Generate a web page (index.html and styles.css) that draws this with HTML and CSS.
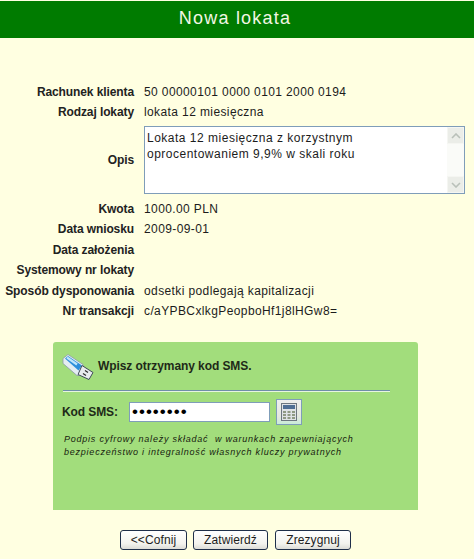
FILE: index.html
```html
<!DOCTYPE html>
<html lang="pl">
<head>
<meta charset="utf-8">
<title>Nowa lokata</title>
<link rel="stylesheet" href="styles.css">
</head>
<body>
<header class="title">Nowa lokata</header>
<main class="details">
  <div class="label">Rachunek klienta</div><div class="value">50 00000101 0000 0101 2000 0194</div>
  <div class="label">Rodzaj lokaty</div><div class="value">lokata 12 miesięczna</div>
  <div class="label">Opis</div>
  <div class="memo">
    <div class="memo-text">Lokata 12 miesięczna z korzystnym oprocentowaniem 9,9% w skali roku</div>
    <div class="scroll">
      <span class="scroll-btn"><svg width="10" height="6" viewBox="0 0 10 6"><path d="M1 5 5 1l4 4" fill="none" stroke="#b9c0b9" stroke-width="1.6"/></svg></span>
      <span class="scroll-btn"><svg width="10" height="6" viewBox="0 0 10 6"><path d="M1 1l4 4 4-4" fill="none" stroke="#b9c0b9" stroke-width="1.6"/></svg></span>
    </div>
  </div>
  <div class="label">Kwota</div><div class="value">1000.00 PLN</div>
  <div class="label">Data wniosku</div><div class="value">2009-09-01</div>
  <div class="label">Data założenia</div><div class="value"></div>
  <div class="label">Systemowy nr lokaty</div><div class="value"></div>
  <div class="label">Sposób dysponowania</div><div class="value">odsetki podlegają kapitalizacji</div>
  <div class="label">Nr transakcji</div><div class="value">c/aYPBCxlkgPeopboHf1j8lHGw8=</div>
</main>
<section class="panel">
  <div class="panel-head">
    <svg class="usb" width="33" height="29" viewBox="0 0 33 28">
      <path d="M1 5 6 1l15 10 1 5-5 6-2 0L1 10z" fill="#e4edf2" stroke="#8b9aa8" stroke-width=".8"/>
      <path d="M3 5 6 2.500l14 9.500-3.500 5z" fill="#2e8fdc"/>
      <path d="M5 4l10 7" stroke="#bfe6fb" stroke-width="2.200"/>
      <path d="M20 12l11 7-4 7-11-5z" fill="#e8ebee" stroke="#3f4c58" stroke-width="1"/>
      <path d="M23 17l3 2M21 20l3 2" stroke="#2d2d2d" stroke-width="1.300"/>
    </svg>
    <h2 class="panel-title">Wpisz otrzymany kod SMS.</h2>
  </div>
  <hr class="rule">
  <div class="code-row">
    <label class="code-label" for="code">Kod SMS:</label>
    <input class="code-input" id="code" type="password" value="12345678">
    <button class="calc" type="button" aria-label="Klawiatura">
      <svg width="16" height="18" viewBox="0 0 16 18">
        <rect x=".5" y=".5" width="15" height="17" fill="#dfe3e6" stroke="#6d7780"/>
        <rect x="2" y="2" width="12" height="4" fill="#4f6f94"/>
        <path d="M2 8h3v2H2zM6.500 8h3v2h-3zM11 8h3v2h-3zM2 11h3v2H2zM6.500 11h3v2h-3zM11 11h3v2h-3zM2 14h3v2H2zM6.500 14h3v2h-3zM11 14h3v2h-3z" fill="#8f9a84"/>
      </svg>
    </button>
  </div>
  <p class="note">Podpis cyfrowy należy składać&nbsp; w warunkach zapewniających bezpieczeństwo i integralność własnych kluczy prywatnych</p>
</section>
<nav class="actions">
  <button class="btn btn-back" type="button">&lt;&lt;Cofnij</button>
  <button class="btn btn-ok" type="button">Zatwierdź</button>
  <button class="btn btn-no" type="button">Zrezygnuj</button>
</nav>
</body>
</html>
```

FILE: styles.css
```css
html, body { margin: 0; padding: 0; }
body {
  width: 474px;
  height: 559px;
  overflow: hidden;
  background: #ffffe1;
  color: #1c1c1c;
  font: 12px "Liberation Sans", Arial, sans-serif;
  padding-top: 1px;
  box-sizing: border-box;
}
.title {
  height: 37px;
  line-height: 35px;
  padding-right: 4px;
  background: #007b00;
  color: #f2f7e4;
  text-align: center;
  font-size: 18px;
  letter-spacing: 1.2px;
}
.details {
  display: grid;
  grid-template-columns: 134px 321px;
  grid-template-rows: 21px 20.2px 76.2px;
  column-gap: 10px;
  grid-auto-rows: 20.5px;
  align-items: center;
  margin-top: 43px;
  height: 242px;
}
.label { text-align: right; font-weight: bold; color: #222; letter-spacing: -.1px; }
.value { letter-spacing: .39px; }
.memo {
  height: 68px;
  display: flex;
  box-sizing: border-box;
  background: #fff;
  border: 1px solid #7f9db9;
}
.memo-text { flex: 1; padding: 3px 16px 0 2px; line-height: 16px; letter-spacing: .5px; }
.scroll {
  width: 17px;
  display: flex;
  flex-direction: column;
  justify-content: space-between;
  background: #fafbf8;
}
.scroll-btn {
  height: 17px;
  background: #ebede8;
  border: 1px solid #f5f6f2;
  box-sizing: border-box;
  display: flex;
  align-items: center;
  justify-content: center;
}
.panel {
  width: 365px;
  height: 168px;
  margin: 19px 0 0 53px;
  padding: 7px 0 0 9px;
  box-sizing: border-box;
  background: #a2dd7c;
  border-radius: 3px 3px 0 0;
}
.panel-head { display: flex; align-items: center; gap: 3px; height: 34px; }
.panel-head .usb { flex: none; margin-top: 3px; }
.panel-title { margin: 0; font-size: 12px; font-weight: bold; color: #1e2a18; letter-spacing: -.08px; }
.rule {
  width: 327px;
  height: 1px;
  margin: 7px 0 0 1px;
  border: 0;
  background: #6f8fa8;
  box-shadow: 0 1px 0 #e7f5df;
}
.code-row { display: flex; align-items: center; margin-top: 8px; height: 26px; }
.code-label { width: 67px; font-weight: bold; font-size: 12px; color: #1e2a18; letter-spacing: -.1px; }
.code-input {
  width: 141px;
  height: 20px;
  box-sizing: border-box;
  border: 1px solid #7f9db9;
  padding: 0 2px;
  margin: 0;
  font: 17px "Liberation Sans", Arial, sans-serif;
  letter-spacing: 1px;
  background: #fff;
}
.calc {
  width: 26px;
  height: 26px;
  margin-left: 6px;
  padding: 0;
  display: flex;
  align-items: center;
  justify-content: center;
  border: 1px solid #7f9db9;
  background: linear-gradient(#eef0ee, #e4e8e0 70%, #c8ecd8);
}
.note {
  margin: 8px 0 0 2px;
  width: 300px;
  font-size: 9px;
  line-height: 13px;
  font-style: italic;
  letter-spacing: .77px;
  color: #17220f;
}
.actions { display: flex; margin: 20px 0 0 120px; }
.btn {
  height: 20px;
  padding: 0;
  box-sizing: border-box;
  border: 1px solid #1f2f4a;
  border-radius: 3px;
  background: linear-gradient(#fff, #f3f3ee 70%, #dcdcd6);
  color: #1c1c1c;
  font: 12px "Liberation Sans", Arial, sans-serif;
  letter-spacing: .1px;
}
.btn-back { width: 67px; }
.btn-ok { width: 75px; margin-left: 6px; }
.btn-no { width: 76px; margin-left: 7px; }
```
